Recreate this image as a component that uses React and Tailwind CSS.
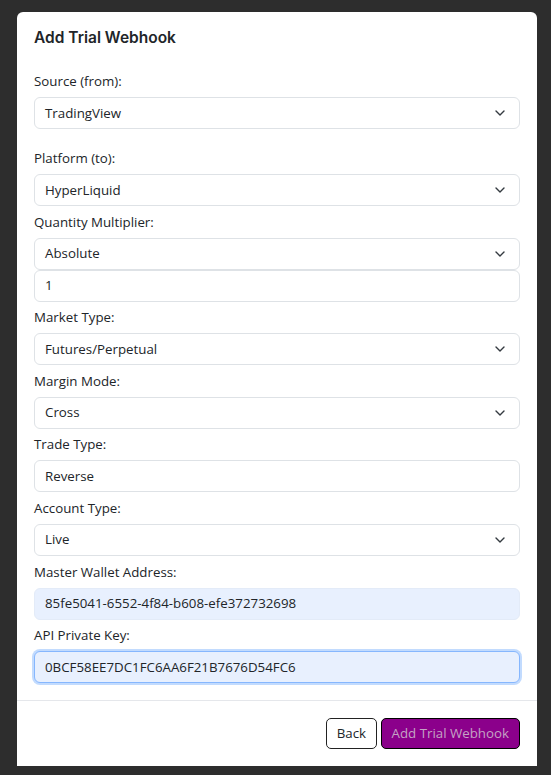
import React from "react";

const Chevron = () => (
  <svg width="10" height="6" viewBox="0 0 10 6" className="absolute right-[14px] top-1/2 -translate-y-1/2" fill="none">
    <polyline points="1,1 5,5 9,1" stroke="#343a40" strokeWidth="1.4" strokeLinecap="round" strokeLinejoin="round" />
  </svg>
);

const Select = ({ value, chevron = true }) => (
  <div className="relative h-[32px] w-full rounded-[6px] border border-[#dee2e6] bg-white pl-[10px] pt-[1px] flex items-center text-[13.3px] text-[#212529]">
    <span>{value}</span>
    {chevron && <Chevron />}
  </div>
);

const Input = ({ value, cls = "" }) => (
  <div className={"h-[32px] w-full rounded-[6px] border pl-[10px] pt-[1px] flex items-center text-[13.3px] text-[#212529] " + cls}>
    <span>{value}</span>
  </div>
);

const Label = ({ children }) => (
  <div className="h-[21px] leading-[22px] mb-[6px] text-[13.3px] text-[#212529]">{children}</div>
);

export default function App() {
  return (
    <div
      className="min-h-screen w-full bg-[#2d2d2d] pt-[12px] pl-[17px]"
      style={{ fontFamily: '"Open Sans", "Liberation Sans", sans-serif' }}
    >
      <div className="w-[520px] bg-white rounded-t-[6px]">
        <div className="pt-[15px] px-[17px]">
          <h1
            className="h-[20px] leading-[22px] text-[15.5px] font-semibold text-[#212529]"
            style={{ fontFamily: 'Inter, "Liberation Sans", sans-serif' }}
          >
            Add Trial Webhook
          </h1>
        </div>
        <div className="px-[17px] pt-[23px] pb-[16.5px] flex flex-col gap-[4.6px]">
          <div className="mb-[13.4px]">
            <Label>Source (from):</Label>
            <Select value="TradingView" />
          </div>
          <div>
            <Label>Platform (to):</Label>
            <Select value="HyperLiquid" />
          </div>
          <div>
            <Label>Quantity Multiplier:</Label>
            <Select value="Absolute" />
            <Input value="1" cls="border-[#dee2e6] bg-white" />
          </div>
          <div>
            <Label>Market Type:</Label>
            <Select value="Futures/Perpetual" />
          </div>
          <div>
            <Label>Margin Mode:</Label>
            <Select value="Cross" />
          </div>
          <div>
            <Label>Trade Type:</Label>
            <Select value="Reverse" chevron={false} />
          </div>
          <div>
            <Label>Account Type:</Label>
            <Select value="Live" />
          </div>
          <div>
            <Label>Master Wallet Address:</Label>
            <Input value="85fe5041-6552-4f84-b608-efe372732698" cls="border-[#e3ebf8] bg-[#e8f0fe]" />
          </div>
          <div>
            <Label>API Private Key:</Label>
            <Input
              value="0BCF58EE7DC1FC6AA6F21B7676D54FC6"
              cls="border-[#86b7fe] bg-[#e8f0fe] shadow-[0_0_0_2px_#c2dbfe]"
            />
          </div>
        </div>
        <div className="border-t border-[#e5e7eb] pt-[17px] pb-[17px] pr-[17px] flex justify-end gap-[4px]">
          <button className="h-[31px] px-[9.5px] pt-[1px] rounded-[5px] border border-[#222] bg-white text-[13.3px] text-[#212529]">
            Back
          </button>
          <button className="h-[31px] px-[10px] pt-[1px] rounded-[5px] border border-black bg-[#8b008b] text-[13.3px] text-[#c4a3c4]">
            Add Trial Webhook
          </button>
        </div>
      </div>
    </div>
  );
}
